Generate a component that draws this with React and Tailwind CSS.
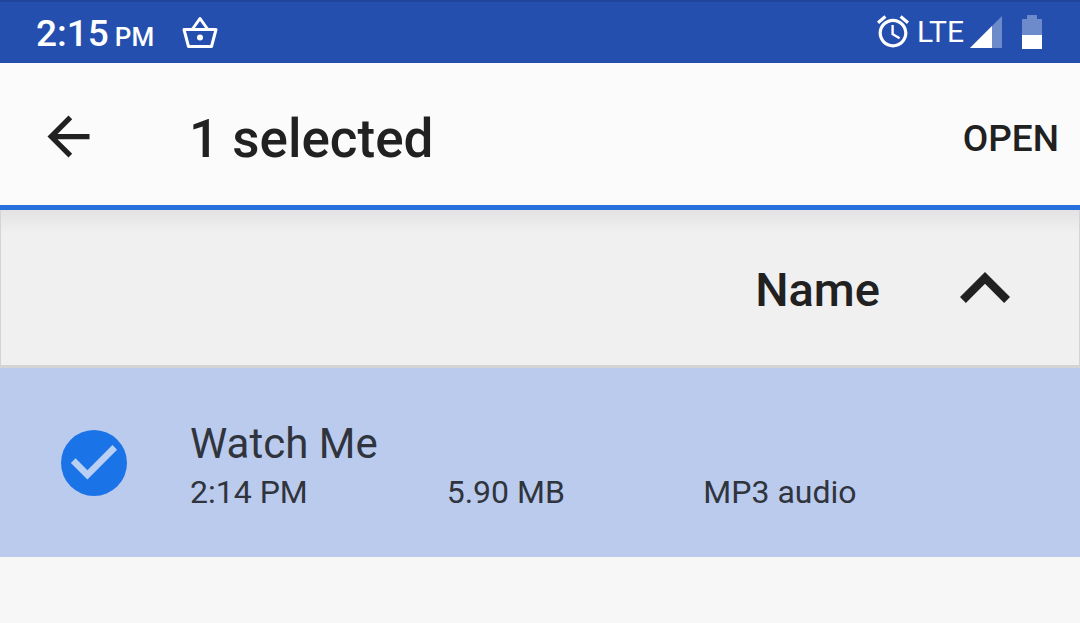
import { useState } from 'react'

const files = [
  { id: 'watch-me', name: 'Watch Me', modified: '2:14 PM', size: '5.90 MB', type: 'MP3 audio' },
]

function StatusBar() {
  return (
    <div className="flex h-[63px] items-center justify-between border-t-2 border-[#1f459b] bg-[#244fae] pl-9 pr-[38px] text-white">
      <div className="flex items-center gap-7">
        <div className="flex items-baseline gap-1.5 pt-0.5 font-medium">
          <span className="text-[37px] leading-10">2:15</span>
          <span className="text-[26px] leading-8">PM</span>
        </div>
        <svg className="h-[33px] w-9" viewBox="0 0 36 33" fill="none" stroke="currentColor" strokeWidth="3" strokeLinejoin="round" aria-hidden="true">
          <path d="M2 13.500H34L29.500 30.500H6.500Z" />
          <path d="M10.500 13L18 2.500L25.500 13" />
          <circle cx="18" cy="21.500" r="3" fill="currentColor" stroke="none" />
        </svg>
      </div>
      <div className="flex items-center pb-0.5">
        <svg className="h-[33px] w-8" viewBox="2 2 20 20" fill="currentColor" aria-hidden="true">
          <path d="M22 5.720l-4.600-3.860-1.290 1.530 4.600 3.860L22 5.720zM7.880 3.390L6.600 1.860 2 5.710l1.290 1.530 4.590-3.850zM12.500 8H11v6l4.750 2.850.75-1.230-4-2.370V8zM12 4c-4.970 0-9 4.030-9 9s4.020 9 9 9c4.970 0 9-4.030 9-9s-4.030-9-9-9zm0 16c-3.870 0-7-3.130-7-7s3.130-7 7-7 7 3.130 7 7-3.130 7-7 7z" />
        </svg>
        <span className="ml-2 text-[30px] leading-10">LTE</span>
        <svg className="ml-1.5 h-8 w-8" viewBox="0 0 32 32" aria-hidden="true">
          <path d="M0 32L32 0V32Z" fill="#6d8acb" />
          <path d="M0 32L22 10V32Z" fill="#fff" />
        </svg>
        <svg className="ml-5 h-[34px] w-5" viewBox="0 0 20 34" aria-hidden="true">
          <path d="M5 0H15V4H20V20H0V4H5Z" fill="#6d8acb" />
          <path d="M0 20H20V34H0Z" fill="#fff" />
        </svg>
      </div>
    </div>
  )
}

function Toolbar({ count }) {
  return (
    <header className="flex h-[147px] items-center border-b-5 border-[#2671dc] bg-[#fbfbfb] pt-[5px] pl-[37px] pr-[21px]">
      <button type="button" aria-label="Back" className="shrink-0">
        <svg className="size-[63px]" viewBox="0 0 24 24" fill="currentColor" aria-hidden="true">
          <path d="M20 11H7.830l5.590-5.590L12 4l-8 8 8 8 1.410-1.410L7.830 13H20v-2z" />
        </svg>
      </button>
      <h1 className="ml-[89px] pt-1 text-[53px] leading-[60px] font-medium">{count} selected</h1>
      <button type="button" className="ml-auto pt-1 text-[37px] leading-10 font-medium">
        OPEN
      </button>
    </header>
  )
}

function SortBar({ ascending, onToggle }) {
  return (
    <div className="flex h-[158px] items-center justify-end border-x border-b-3 border-x-[#d4d4d4] border-b-[#d4d4d4] bg-linear-to-b from-[#e3e3e5] to-[#f0f0f0] to-15% pr-[69px]">
      <button type="button" onClick={onToggle} className="flex items-center gap-20">
        <span className="pt-1 text-[47px] leading-14 font-medium">Name</span>
        <svg className={ascending ? 'h-[31px] w-[50px]' : 'h-[31px] w-[50px] rotate-180'} viewBox="6 8 12 7.410" fill="currentColor" aria-hidden="true">
          <path d="M12 8l-6 6 1.410 1.410L12 10.830l4.590 4.580L18 14z" />
        </svg>
      </button>
    </div>
  )
}

function FileRow({ file, checked, onToggle }) {
  return (
    <li className={checked ? 'bg-[#bbcbed]' : 'bg-[#f7f7f7]'}>
      <label className="flex h-[189px] items-center pl-[61px] pr-[120px] text-[#30343d]">
        <input type="checkbox" checked={checked} onChange={onToggle} aria-label={file.name} className="peer sr-only" />
        <svg className="size-[66px] shrink-0 opacity-40 peer-checked:opacity-100" viewBox="2 2 20 20" aria-hidden="true">
          <circle cx="12" cy="12" r="10" fill="#1b73e8" />
          <path d="M10 17l-5-5 1.410-1.410L10 14.170l7.590-7.590L19 8z" fill="#b9cff3" />
        </svg>
        <div className="ml-[63px] flex-1 pt-0.5">
          <div className="text-[42px] leading-14">{file.name}</div>
          <div className="grid grid-cols-3 text-[32px] leading-10">
            <span>{file.modified}</span>
            <span>{file.size}</span>
            <span>{file.type}</span>
          </div>
        </div>
      </label>
    </li>
  )
}

export default function App() {
  const [selected, setSelected] = useState(['watch-me'])
  const [ascending, setAscending] = useState(true)

  function toggle(id) {
    setSelected(selected.includes(id) ? selected.filter((s) => s !== id) : [...selected, id])
  }

  return (
    <div className="min-h-screen bg-[#f7f7f7] font-[Roboto,sans-serif] text-[#212121]">
      <StatusBar />
      <Toolbar count={selected.length} />
      <SortBar ascending={ascending} onToggle={() => setAscending(!ascending)} />
      <ul>
        {files.map((file) => (
          <FileRow key={file.id} file={file} checked={selected.includes(file.id)} onToggle={() => toggle(file.id)} />
        ))}
      </ul>
    </div>
  )
}
